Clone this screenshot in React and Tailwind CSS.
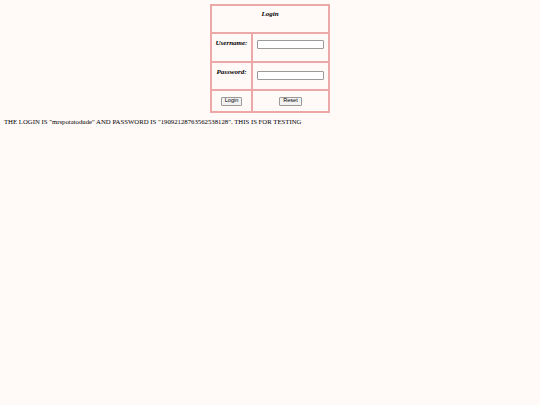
import React from 'react';

const App = () => {
    return (
        <div className="min-h-[405px] w-[540px] bg-[#fff9f8] text-black" style={{ fontFamily: '"Liberation Serif", serif' }}>
            <div className="pt-[4px] flex justify-center">
                <div className="w-[120px] border border-[#eca7a7] grid grid-cols-[41px_1fr] text-[7px]">
                    <div className="col-span-2 h-[28px] border border-[#eca7a7] flex justify-center pt-[3px] font-bold italic">Login</div>
                    <div className="h-[29px] border border-[#eca7a7] flex justify-center pt-[4px] font-bold italic">Username:</div>
                    <div className="h-[29px] border border-[#eca7a7] flex justify-center pt-[6px]">
                        <input className="w-[67px] h-[9px] bg-white border border-[#9a9a9a] rounded-[1px]" />
                    </div>
                    <div className="h-[28px] border border-[#eca7a7] flex justify-center pt-[4px] font-bold italic">Password:</div>
                    <div className="h-[28px] border border-[#eca7a7] flex justify-center pt-[8px]">
                        <input type="password" className="w-[67px] h-[9px] bg-white border border-[#9a9a9a] rounded-[1px]" />
                    </div>
                    <div className="h-[22px] border border-[#eca7a7] flex items-center justify-center">
                        <button className="h-[9px] px-[3px] bg-[#f2f2f2] border border-[#9a9a9a] rounded-[1px] text-[5.5px] leading-none" style={{ fontFamily: '"Liberation Sans", sans-serif' }}>Login</button>
                    </div>
                    <div className="h-[22px] border border-[#eca7a7] flex items-center justify-center">
                        <button className="h-[9px] px-[3px] bg-[#f2f2f2] border border-[#9a9a9a] rounded-[1px] text-[5.5px] leading-none" style={{ fontFamily: '"Liberation Sans", sans-serif' }}>Reset</button>
                    </div>
                </div>
            </div>
            <div className="pl-[4px] pt-[4px] text-[6.75px]">THE LOGIN IS "mrspotatodude" AND PASSWORD IS "19092128763562538128". THIS IS FOR TESTING</div>
        </div>
    );
};

export default App;
